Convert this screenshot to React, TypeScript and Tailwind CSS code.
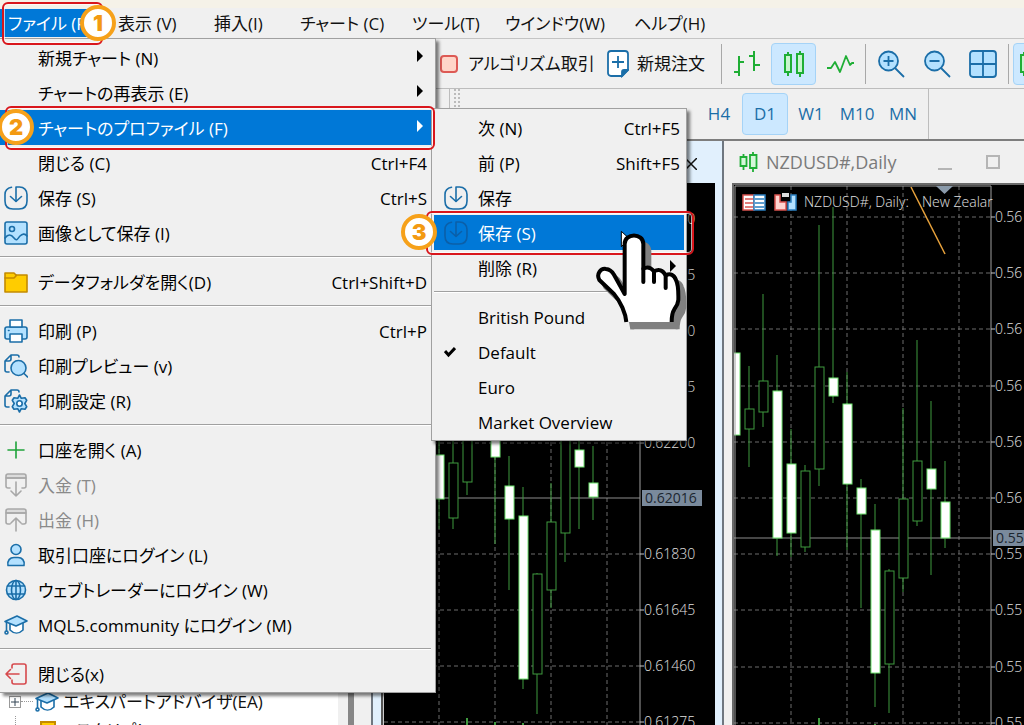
import type { ReactNode } from "react";

type MenuEntry = {
  label: string;
  shortcut?: string;
  icon?: ReactNode;
  disabled?: boolean;
  active?: boolean;
  arrow?: boolean;
  children?: ReactNode;
};

// [x, high, bodyTop, bodyBottom, low, bearish]
type Candle = [number, number, number, number, number, boolean];

const BLUE = "#1b6ea8";
const SKY = "#b3e1ff";

function Icon({ children, stroke = BLUE }: { children: ReactNode; stroke?: string }) {
  return (
    <svg
      className="h-6 w-6 shrink-0"
      viewBox="0 0 24 24"
      fill="none"
      stroke={stroke}
      strokeWidth="1.6"
      strokeLinecap="round"
      strokeLinejoin="round"
    >
      {children}
    </svg>
  );
}

const SaveIcon = ({ stroke = BLUE }: { stroke?: string }) => (
  <Icon stroke={stroke}>
    <path d="M7.5 1.2C3.5 2 1 4.5 1 8.5V15c0 5 3 8 8 8h6c5 0 8-3 8-8V8.5C23 4 20 1 15.5 1H12v14" />
    <path d="M6.5 10.5 12 15.5l5.5-5" />
  </Icon>
);

const ImageIcon = () => (
  <Icon>
    <rect x="1" y="1" width="22" height="22" rx="2" fill={SKY} />
    <circle cx="8" cy="8" r="2.5" />
    <path d="M1 17c3-4 6-4 9 0s4 0 6-2 5-3 7 0" />
  </Icon>
);

const FolderIcon = () => (
  <Icon stroke="#c48a00">
    <path d="M1 3h9l2 2h11v17H1z" fill="#ffcc00" />
    <path d="M1 8h9l2-2V5" />
  </Icon>
);

const PrinterIcon = () => (
  <Icon>
    <rect x="1" y="8" width="22" height="12" rx="2" fill={SKY} />
    <path d="M6 1h12v7H6zM6 15h12v8H6z" fill="#fff" />
    <path d="M4.5 11.5h.5" />
  </Icon>
);

const PreviewIcon = () => (
  <Icon>
    <path d="M5 18H3a2 2 0 0 1-2-2V7l6-6h6a2 2 0 0 1 2 2M1 7h4a2 2 0 0 0 2-2V1" />
    <circle cx="14.5" cy="14" r="7.5" fill={SKY} />
    <path d="m20 19.5 3.5 3.5" />
  </Icon>
);

const SetupIcon = () => (
  <Icon>
    <path d="M5 18H3a2 2 0 0 1-2-2V7l6-6h6a2 2 0 0 1 2 2M1 7h4a2 2 0 0 0 2-2V1" />
    <path
      d="m15.5 6 1.8 3.3 3.7-.6 1.7 2.6-1.9 3.2 1.9 3.2-1.7 2.6-3.7-.6-1.8 3.3-1.8-3.3-3.7.6-1.7-2.6 1.9-3.2-1.9-3.2 1.7-2.6 3.7.6z"
      fill={SKY}
    />
    <circle cx="15.5" cy="14.5" r="2.7" fill="#fff" />
  </Icon>
);

const PlusIcon = () => (
  <Icon stroke="#1fa33a">
    <path d="M4 12h16M12 4v16" />
  </Icon>
);

const DepositIcon = () => (
  <Icon stroke="#a8a8a8">
    <path d="M2 5V3a2 2 0 0 1 2-2h16a2 2 0 0 1 2 2v2z" fill="#dcdcdc" />
    <path d="M6 15H4a2 2 0 0 1-2-2V5h20v8a2 2 0 0 1-2 2h-2M12 9v14M7 18l5 5 5-5" />
  </Icon>
);

const WithdrawIcon = () => (
  <Icon stroke="#a8a8a8">
    <path d="M2 5V3a2 2 0 0 1 2-2h16a2 2 0 0 1 2 2v2z" fill="#dcdcdc" />
    <path d="M6 16H4a2 2 0 0 1-2-2V5h20v9a2 2 0 0 1-2 2h-2M12 23V10M7 15l5-5 5 5" />
  </Icon>
);

const UserIcon = () => (
  <Icon>
    <circle cx="12" cy="6.5" r="5" fill={SKY} />
    <path d="M4 22.5c-1-5 2-8 6-8h4c4 0 7 3 6 8z" fill={SKY} />
  </Icon>
);

const GlobeIcon = () => (
  <Icon>
    <circle cx="12" cy="12" r="9.5" fill={SKY} />
    <ellipse cx="12" cy="12" rx="4.5" ry="9.5" />
    <path d="M12 2.5v19M3.5 8h17M3.5 16h17" />
  </Icon>
);

const CapIcon = () => (
  <Icon>
    <path d="M6 10v7c4 4 9 4 13 0v-7" fill="#fff" />
    <path d="M1 8.5 13 3l10 5-11 5z" fill={SKY} />
    <path d="M2.5 9v9" />
    <circle cx="2.5" cy="19.5" r="1.5" />
  </Icon>
);

const ExitIcon = () => (
  <Icon stroke="#d6494d">
    <path d="M8 6V4a2 2 0 0 1 2-2h10a2 2 0 0 1 2 2v16a2 2 0 0 1-2 2H10a2 2 0 0 1-2-2v-2M15 12H2M6.5 7.5 2 12l4.5 4.5" />
  </Icon>
);

const CheckIcon = () => (
  <svg className="h-3 w-3" viewBox="0 0 12 12" fill="none" stroke="#000" strokeWidth="3">
    <path d="M1 5 4.5 9 11 2" />
  </svg>
);

const CandlesIcon = () => (
  <svg className="h-7 w-7 shrink-0" viewBox="0 0 28 28" fill="none" stroke="#1fae35" strokeWidth="2">
    <path d="M8 2v24M20 1v26" />
    <path d="M5 5h6v17H5zM17 4h6v19h-6z" fill="#c9f5cf" />
  </svg>
);

const BarsIcon = () => (
  <svg className="h-7 w-7" viewBox="0 0 28 28" fill="none" stroke="#1fae35" strokeWidth="2">
    <path d="M6 6v20M6 12h5M1 22h5M21 1v20M16 6h5M21 15h6" />
  </svg>
);

const LineIcon = () => (
  <svg className="h-7 w-7" viewBox="0 0 28 28" fill="none" stroke="#1fae35" strokeWidth="1.8" strokeLinejoin="round">
    <path d="M1 18h4l4-6 5 10 6-16 4 9 2-2h2" />
  </svg>
);

const ZoomGlass = ({ plus }: { plus?: boolean }) => (
  <svg className="h-7 w-7" viewBox="0 0 28 28" fill="none" stroke={BLUE} strokeWidth="1.8">
    <circle cx="11.5" cy="11" r="9.5" fill={SKY} />
    <path d="m18 18 9 9M6.5 11h10" />
    {plus && <path d="M11.5 6v10" />}
  </svg>
);

const TileIcon = () => (
  <svg className="h-7 w-7" viewBox="0 0 28 28" fill={SKY} stroke={BLUE} strokeWidth="1.8">
    <rect x="1" y="1" width="26" height="26" rx="3" />
    <path d="M14 1v26M1 14h26" />
  </svg>
);

function MenuRow({ label, shortcut, icon, disabled, active, arrow, children }: MenuEntry) {
  return (
    <li className="relative">
      <button
        disabled={disabled}
        className={`flex h-[35px] w-full items-center text-left whitespace-nowrap ${
          active ? "bg-[#0078d7] text-white" : disabled ? "text-[#8a8a8a]" : ""
        }`}
      >
        <span className="flex w-[34px] shrink-0 items-center">{icon}</span>
        <span className="grow pt-0.5">{label}</span>
        {shortcut && <span className="pt-0.5 pr-1">{shortcut}</span>}
        {arrow && (
          <svg className="mr-2 mb-1" width="6" height="12" viewBox="0 0 6 12" fill="currentColor">
            <path d="M0 0v12l6-6z" />
          </svg>
        )}
      </button>
      {children}
    </li>
  );
}

const Separator = () => (
  <li className="flex h-3.5 items-center" role="separator">
    <span className="h-0.5 w-full border-t border-[#a0a0a0] bg-white" />
  </li>
);

function ProfileMenu() {
  return (
    <ul className="absolute left-[431px] -top-0.5 w-64 border border-[#a0a0a0] bg-[#f0f0f0] px-0.5 py-px text-black shadow-[3px_3px_3px_rgba(0,0,0,0.5)] [&>li>button]:pl-2.5">
      <MenuRow label="次 (N)" shortcut="Ctrl+F5" />
      <MenuRow label="前 (P)" shortcut="Shift+F5" />
      <MenuRow label="保存" icon={<SaveIcon />} />
      <MenuRow label="保存 (S)" icon={<SaveIcon stroke="#0b5fa8" />} active>
        <Outline className="-top-1 -left-2 h-11 w-[268px]" />
        <Badge n={3} className="-top-px -left-[33px]" />
        <HandCursor />
      </MenuRow>
      <MenuRow label="削除 (R)" arrow />
      <Separator />
      <MenuRow label="British Pound" />
      <MenuRow label="Default" icon={<CheckIcon />} />
      <MenuRow label="Euro" />
      <MenuRow label="Market Overview" />
    </ul>
  );
}

function FileMenu() {
  return (
    <ul className="absolute top-[29px] left-0 z-20 w-[436px] border border-l-0 border-[#a0a0a0] bg-[#f0f0f0] py-px pr-1 text-black shadow-[3px_3px_3px_rgba(0,0,0,0.5)] [&>li>button]:pl-1">
      <MenuRow label="新規チャート (N)" arrow />
      <MenuRow label="チャートの再表示 (E)" arrow />
      <MenuRow label="チャートのプロファイル (F)" arrow active>
        <Outline className="-top-1 left-[5px] h-11 w-[430px]" />
        <Badge n={2} className="-top-px -left-0.5" />
        <ProfileMenu />
      </MenuRow>
      <MenuRow label="閉じる (C)" shortcut="Ctrl+F4" />
      <MenuRow label="保存 (S)" shortcut="Ctrl+S" icon={<SaveIcon />} />
      <MenuRow label="画像として保存 (I)" icon={<ImageIcon />} />
      <Separator />
      <MenuRow label="データフォルダを開く(D)" shortcut="Ctrl+Shift+D" icon={<FolderIcon />} />
      <Separator />
      <MenuRow label="印刷 (P)" shortcut="Ctrl+P" icon={<PrinterIcon />} />
      <MenuRow label="印刷プレビュー (v)" icon={<PreviewIcon />} />
      <MenuRow label="印刷設定 (R)" icon={<SetupIcon />} />
      <Separator />
      <MenuRow label="口座を開く (A)" icon={<PlusIcon />} />
      <MenuRow label="入金 (T)" icon={<DepositIcon />} disabled />
      <MenuRow label="出金 (H)" icon={<WithdrawIcon />} disabled />
      <MenuRow label="取引口座にログイン (L)" icon={<UserIcon />} />
      <MenuRow label="ウェブトレーダーにログイン (W)" icon={<GlobeIcon />} />
      <MenuRow label="MQL5.community にログイン (M)" icon={<CapIcon />} />
      <Separator />
      <MenuRow label="閉じる(x)" icon={<ExitIcon />} />
    </ul>
  );
}

/* Tutorial marks: red outline, numbered badge, pointing hand */

function Outline({ className }: { className: string }) {
  return (
    <span
      className={`pointer-events-none absolute z-10 rounded-md border-2 border-[#d9161c] shadow-[inset_0_0_0_1px_#ffffffaa] ${className}`}
    />
  );
}

function Badge({ n, className }: { n: number; className: string }) {
  return (
    <span
      className={`absolute z-10 flex h-9 w-9 items-center justify-center rounded-full border-4 border-[#f6a11a] bg-white font-['Inter',sans-serif] text-[22px] font-black text-[#f39a12] ${className}`}
    >
      {n}
    </span>
  );
}

function HandCursor() {
  const hand =
    "M97 276C95 250 80 215 60 192L16 150C6 132 20 114 36 117c12 1 18 7 24 17l32 58V42c0-34 56-34 56 0v74q18-10 32 8 22-12 35 12 22-10 31 14 8 15 7 60-1 14-12 28-8 12-8 38";
  return (
    <svg
      className="absolute top-[15px] left-[160px] z-20"
      width="93"
      height="106"
      viewBox="0 0 279 318"
      strokeWidth="12"
      strokeLinejoin="round"
    >
      <path d="M82 4v46l24-24z" fill="#fff" stroke="#000" strokeWidth="3" />
      <g transform="translate(18 22)" fill="#808080" stroke="#808080">
        <path d={hand} />
      </g>
      <g fill="#fff" stroke="#000">
        <path d={hand} />
        <path d="M148 116v40M180 124v32M215 136v38" strokeLinecap="round" />
      </g>
    </svg>
  );
}

const menus = [
  { label: "表示 (V)", width: "w-24" },
  { label: "挿入(I)", width: "w-[86px]" },
  { label: "チャート (C)", width: "w-28" },
  { label: "ツール(T)", width: "w-[93px]" },
  { label: "ウインドウ(W)", width: "w-[129px]" },
  { label: "ヘルプ(H)", width: "w-[100px]" },
];

function MenuBar() {
  return (
    <nav className="flex h-[31px] shrink-0 border-b border-[#c4c4c4] pt-px">
      <div className="relative w-[102px]">
        <button className="h-7 w-24 bg-[#0078d7] pt-0.5 pl-2 text-left whitespace-nowrap text-white">
          ファイル (F)
        </button>
        <Outline className="-top-[7px] left-0.5 z-30 h-[43px] w-[101px]" />
        <Badge n={1} className="-top-1 left-20 z-40" />
        <FileMenu />
      </div>
      {menus.map((m) => (
        <button key={m.label} className={`h-7 pt-0.5 pl-4 text-left whitespace-nowrap ${m.width}`}>
          {m.label}
        </button>
      ))}
    </nav>
  );
}

const Divider = () => <span className="h-10 w-px shrink-0 bg-[#a8a8a8]" />;

function Toolbar() {
  return (
    <div className="flex h-[50px] shrink-0 items-center overflow-hidden border-b border-[#bdbdbd] pl-[440px]">
      <button className="flex w-[167px] shrink-0 items-center gap-2.5 whitespace-nowrap">
        <span className="h-[18px] w-[18px] shrink-0 rounded-sm border-2 border-[#dd5a55] bg-[#ffd5c8]" />
        アルゴリズム取引
      </button>
      <button className="flex w-[114px] shrink-0 items-center gap-2 whitespace-nowrap">
        <svg className="h-7 w-[22px]" viewBox="0 0 22 28" fill="none" stroke={BLUE} strokeWidth="1.8">
          <path d="M4 1h14a3 3 0 0 1 3 3v16l-6 6H4a3 3 0 0 1-3-3V4a3 3 0 0 1 3-3z" fill="#fff" />
          <path d="M15 26v-4a2 2 0 0 1 2-2h4z" fill={BLUE} />
          <path d="M5 12h12M11 6v12" />
        </svg>
        新規注文
      </button>
      <Divider />
      <div className="flex shrink-0 items-center gap-px px-0.5">
        <button className="flex h-10 w-[46px] items-center justify-center" aria-label="Bar chart">
          <BarsIcon />
        </button>
        <button
          className="flex h-[42px] w-[45px] items-center justify-center rounded-sm border border-[#a5d3f7] bg-[#cce8ff]"
          aria-label="Candlesticks"
        >
          <CandlesIcon />
        </button>
        <button className="flex h-10 w-[46px] items-center justify-center" aria-label="Line chart">
          <LineIcon />
        </button>
      </div>
      <Divider />
      <div className="flex shrink-0 items-center gap-[18px] px-[11px]">
        <button aria-label="Zoom in">
          <ZoomGlass plus />
        </button>
        <button aria-label="Zoom out">
          <ZoomGlass />
        </button>
        <button aria-label="Tile windows">
          <TileIcon />
        </button>
      </div>
      <Divider />
      <button
        className="ml-1 flex h-[42px] w-[45px] shrink-0 items-center rounded-sm border border-[#a5d3f7] bg-[#cce8ff] pl-0.5"
        aria-label="Shift chart"
      >
        <CandlesIcon />
      </button>
    </div>
  );
}

const frames = ["H4", "D1", "W1", "M10", "MN"];

function Timeframes() {
  return (
    <div className="flex h-[52px] shrink-0 items-center border-b-2 border-[#7d7d7d] pl-[449px] text-[#1b6ea8]">
      <span className="h-full w-px bg-[#bdbdbd]" />
      <span className="ml-1 h-full w-1.5 border-x-2 border-dotted border-[#bbb]" />
      <div className="ml-[236px] flex items-center">
        {frames.map((f) => (
          <button
            key={f}
            className={`h-[42px] w-[46px] rounded-sm border ${
              f === "D1" ? "border-[#a5d3f7] bg-[#cce8ff]" : "border-transparent"
            }`}
          >
            {f}
          </button>
        ))}
      </div>
      <span className="ml-0.5 h-full w-px bg-[#bdbdbd]" />
    </div>
  );
}

function Navigator() {
  return (
    <aside className="flex w-[371px] shrink-0 bg-[#f0f0f0]">
      <div className="w-[338px] overflow-hidden bg-white pt-[546px] pl-[9px]">
        <div className="flex h-[29px] items-center whitespace-nowrap">
          <span className="flex h-3 w-3 items-center justify-center border border-[#999]">
            <svg width="8" height="8" viewBox="0 0 8 8" stroke="#345">
              <path d="M0 4h8M4 0v8" />
            </svg>
          </span>
          <span className="mr-0.5 w-3 border-t border-dotted border-[#999]" />
          <CapIcon />
          <span className="pl-1">エキスパートアドバイザ(EA)</span>
        </div>
        <div className="ml-1.5 flex h-[29px] items-center gap-5 border-l border-dotted border-[#999] pl-6 whitespace-nowrap">
          <span className="h-5 w-4 border-2 border-[#c48a00] bg-[#ffcc00]" />
          <span>スクリプト</span>
        </div>
      </div>
      <div className="ml-2.5 w-1.5 bg-[#868686]" />
    </aside>
  );
}

type ChartProps = {
  candles: Candle[];
  columns: number[];
  rows: { y: number; label: string }[];
  axis: number;
  price: { y: number; label: string };
  volumes: [number, number][];
  top: number;
  children?: ReactNode;
};

function Chart({ candles, columns, rows, axis, price, volumes, top, children }: ChartProps) {
  return (
    <svg className="block h-full w-full bg-black font-['Open_Sans',sans-serif] text-[14px] font-light" fill="#e0e0e0">
      <g stroke="#6d6d6d" strokeDasharray="4 3">
        {columns.map((x) => (
          <line key={x} x1={x} x2={x} y1={top} y2="100%" />
        ))}
        {rows.map((r) => (
          <line key={r.y} x1="0" x2={axis} y1={r.y} y2={r.y} />
        ))}
      </g>
      <line x1="0" x2={axis} y1={price.y} y2={price.y} stroke="#8c8c8c" />
      {candles.map(([x, high, t, b, low, bearish]) => (
        <g key={x} stroke="#3f9a3f">
          <line x1={x} x2={x} y1={high} y2={low} />
          <rect
            x={x - 4}
            y={t}
            width="9"
            height={b - t}
            fill={bearish ? "#fff" : "#000"}
            stroke={bearish ? "#6fe36f" : "#3f9a3f"}
          />
        </g>
      ))}
      {volumes.map(([x, y]) => (
        <line key={x} x1={x} x2={x} y1={y} y2="100%" stroke="#3f9a3f" strokeWidth="2" />
      ))}
      <line x1={axis} x2={axis} y1={top} y2="100%" stroke="#a0a0a0" />
      {rows.map((r) => (
        <g key={r.y}>
          <line x1={axis} x2={axis + 4} y1={r.y} y2={r.y} stroke="#c8c8c8" />
          <text x={axis + 4} y={r.y + 5}>
            {r.label}
          </text>
        </g>
      ))}
      <rect x={axis + 2} y={price.y - 8} width="60" height="16" fill="#7a8a9c" />
      <text x={axis + 5} y={price.y + 5} fill="#1c2630" className="font-normal">
        {price.label}
      </text>
      {children}
    </svg>
  );
}

const audCandles: Candle[] = [
  [55, 220, 272, 316, 346, true],
  [69, 240, 280, 335, 346, false],
  [83, 210, 240, 299, 312, false],
  [111, 220, 250, 274, 361, true],
  [125, 273, 303, 336, 407, true],
  [139, 304, 333, 496, 506, true],
  [153, 390, 391, 491, 531, false],
  [167, 300, 339, 407, 425, false],
  [181, 220, 240, 350, 379, false],
  [195, 255, 267, 284, 346, true],
  [209, 263, 300, 314, 337, true],
];

const audRows = [
  { y: 36, label: "0.62940" },
  { y: 92, label: "0.62755" },
  { y: 148, label: "0.62570" },
  { y: 204, label: "0.62385" },
  { y: 260, label: "0.62200" },
  { y: 371, label: "0.61830" },
  { y: 427, label: "0.61645" },
  { y: 483, label: "0.61460" },
  { y: 539, label: "0.61275" },
];

const nzdCandles: Candle[] = [
  [1, 168, 168, 250, 250, true],
  [15, 181, 224, 244, 282, false],
  [29, 109, 196, 227, 242, false],
  [43, 170, 206, 353, 371, true],
  [57, 244, 279, 348, 372, true],
  [71, 280, 286, 362, 367, false],
  [85, 40, 182, 284, 301, false],
  [99, 22, 193, 211, 218, true],
  [113, 187, 219, 299, 365, true],
  [127, 294, 303, 329, 423, true],
  [141, 319, 345, 488, 522, true],
  [155, 384, 386, 479, 528, false],
  [169, 223, 314, 393, 407, false],
  [183, 155, 276, 336, 341, false],
  [197, 216, 284, 304, 390, true],
  [211, 276, 317, 353, 363, true],
];

const nzdRows = [
  { y: 32, label: "0.56" },
  { y: 88, label: "0.56" },
  { y: 144, label: "0.56" },
  { y: 201, label: "0.56" },
  { y: 257, label: "0.56" },
  { y: 313, label: "0.56" },
  { y: 369, label: "0.55" },
  { y: 425, label: "0.55" },
  { y: 482, label: "0.55" },
  { y: 538, label: "0.55" },
];

function Workspace() {
  return (
    <main className="flex min-h-0 grow overflow-hidden">
      <Navigator />
      <section className="flex w-[353px] shrink-0 flex-col border-x-2 border-[#6f7780] bg-[#e1f0fd] pr-[7px] pl-2">
        <header className="flex h-[42px] shrink-0 items-center justify-end pt-1 pr-[18px]">
          <button aria-label="Close chart">
            <svg className="h-3 w-3" viewBox="0 0 12 12" stroke="#111" strokeWidth="1.5">
              <path d="m0 0 12 12M12 0 0 12" />
            </svg>
          </button>
        </header>
        <div className="min-h-0 grow border-l-2 border-[#555]">
          <div className="h-full border-l border-[#ccc]">
            <Chart
              candles={audCandles}
              columns={[55, 111, 167, 223]}
              rows={audRows}
              axis={256}
              top={0}
              price={{ y: 315, label: "0.62016" }}
              volumes={[
                [83, 535],
                [111, 539],
                [139, 540],
              ]}
            />
          </div>
        </div>
      </section>
      <section className="flex min-w-0 grow flex-col bg-[#f0f0f0] pl-2">
        <header className="flex h-[42px] shrink-0 items-center pr-6 pl-[7px] text-[18px] text-[#7a7a7a]">
          <svg className="h-5 w-5" viewBox="0 0 20 20" fill="#d6f7da" stroke="#1fae35" strokeWidth="1.8">
            <path d="M4.5 2v16M14 0v20" />
            <path d="M1.5 5h6v9h-6zM11 3h6.5v13H11z" />
          </svg>
          <span className="ml-[7px] grow">NZDUSD#,Daily</span>
          <button className="mr-[34px] h-4 w-3.5 border-b-2 border-[#b5b5b5]" aria-label="Minimize" />
          <button className="h-3.5 w-3.5 border-2 border-[#b5b5b5]" aria-label="Maximize" />
        </header>
        <div className="min-h-0 grow border-t-2 border-l-2 border-[#6a6a6a]">
          <Chart
            candles={nzdCandles}
            columns={[57, 113, 169, 225]}
            rows={nzdRows}
            axis={257}
            top={1}
            price={{ y: 353, label: "0.55" }}
            volumes={[
              [85, 533],
              [141, 539],
            ]}
          >
            <path d="M1 560V1h256" fill="none" stroke="#a0a0a0" />
            <path d="m177 2 34 67" stroke="#e8a23c" strokeWidth="1.5" />
            <path d="M202 1h17l-8.5 8z" fill="#8a9aaa" />
            <g strokeWidth="1.5">
              <path d="M9 10h11v15H9z" fill="#fff" stroke="#d9534f" />
              <path d="M20 10h11v15H20z" fill="#fff" stroke="#2a7fc0" />
              <path d="M11 14h8M11 18h8M11 22h8" stroke="#d9534f" />
              <path d="M21 14h9M21 18h9M21 22h9" stroke="#2a7fc0" />
              <path d="M41 10h5v7h6v8H41z" fill="#ffd5d0" stroke="#d9534f" />
              <path d="M62 10h-5v7h-3v8h8z" fill={SKY} stroke="#2a7fc0" />
            </g>
            <path d="M48 8h7v4h-7z" fill="#ddd" />
            <text x="70" y="22">
              NZDUSD#, Daily:
            </text>
            <text x="188" y="22">
              New Zealar
            </text>
          </Chart>
        </div>
      </section>
    </main>
  );
}

export default function App() {
  return (
    <div className="flex h-screen flex-col overflow-hidden bg-[#f0f0f0] font-['Open_Sans','Noto_Sans_CJK_JP',sans-serif] text-[17px] leading-6 text-[#111] [font-feature-settings:'palt']">
      <div className="h-2 shrink-0 bg-[#f5f2e8]" />
      <MenuBar />
      <Toolbar />
      <Timeframes />
      <Workspace />
    </div>
  );
}
